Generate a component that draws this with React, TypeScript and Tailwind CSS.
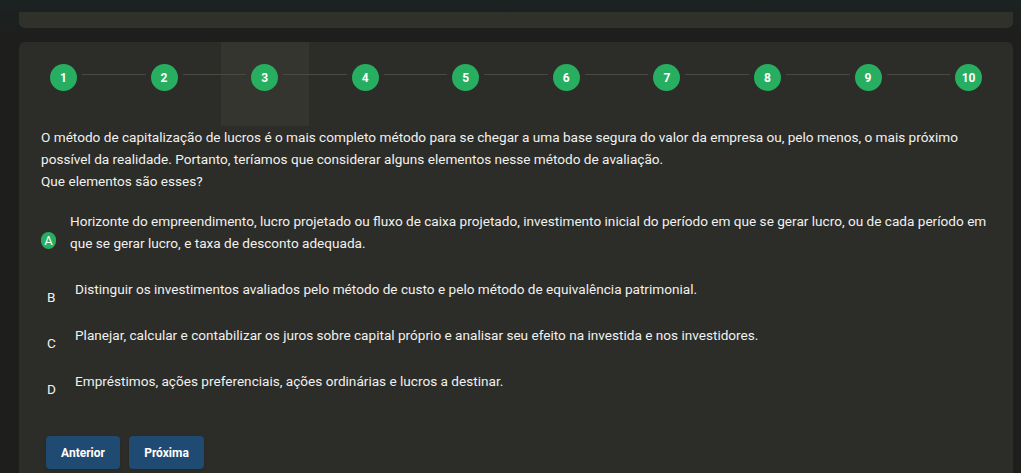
import { Fragment } from 'react'

const steps = [1, 2, 3, 4, 5, 6, 7, 8, 9, 10]

const options = [
  {
    letter: 'A',
    text: 'Horizonte do empreendimento, lucro projetado ou fluxo de caixa projetado, investimento inicial do período em que se gerar lucro, ou de cada período em que se gerar lucro, e taxa de desconto adequada.',
    selected: true,
  },
  { letter: 'B', text: 'Distinguir os investimentos avaliados pelo método de custo e pelo método de equivalência patrimonial.' },
  { letter: 'C', text: 'Planejar, calcular e contabilizar os juros sobre capital próprio e analisar seu efeito na investida e nos investidores.' },
  { letter: 'D', text: 'Empréstimos, ações preferenciais, ações ordinárias e lucros a destinar.' },
]

const App = () => {
  return (
    <div className="min-h-screen bg-[#1e1e1c] font-['Roboto',sans-serif]">
      <div className="bg-gradient-to-b from-[#1b2322] to-[#1e1e1c] pl-[19px] pr-[8px]">
        <div className="h-[28px] pt-[12px]">
          <div className="h-[16px] bg-[#31312c] rounded-b-md" />
        </div>
        <div className="h-[14px]" />
      </div>

      <div className="pl-[19px] pr-[8px]">
        <div className="isolate bg-[#2c2c28] rounded-t-md pb-[24px]">
          {/* etapas */}
          <div className="flex items-start h-[84px] pt-[22px] px-[31px]">
            {steps.map((n, i) => (
              <Fragment key={n}>
                <div className="relative shrink-0">
                  {n === 3 && (
                    <div className="absolute -z-10 -top-[22px] h-[84px] -left-[30px] -right-[31px] bg-[#353530]" />
                  )}
                  <div className="w-[27px] h-[27px] rounded-full bg-[#27ae60] text-white text-[12px] font-bold flex items-center justify-center">
                    {n}
                  </div>
                </div>
                {i < steps.length - 1 && <div className="flex-1 h-px mt-[10px] mx-[5px] bg-[#4a4a44]" />}
              </Fragment>
            ))}
          </div>

          <div className="px-[22px] text-[13.6px] leading-[22px] text-[#f1f1ef]">
            <p>
              O método de capitalização de lucros é o mais completo método para se chegar a uma base segura do valor da empresa ou, pelo menos, o mais próximo possível da realidade. Portanto, teríamos que considerar alguns elementos nesse método de avaliação.
              <br />
              Que elementos são esses?
            </p>

            <div className="flex flex-col mt-[18px]">
              {options.map((o) =>
                o.selected ? (
                  <div key={o.letter} className="flex items-start mb-[24px]">
                    <span className="mt-[22px] mr-[14px] w-[15px] h-[17px] shrink-0 rounded-full bg-[#27ae60] text-white text-[13px] leading-[17px] text-center">
                      {o.letter}
                    </span>
                    <span>{o.text}</span>
                  </div>
                ) : (
                  <div key={o.letter} className="flex items-start mb-[16px]">
                    <span className="mt-[8px] w-[34px] pl-[6px] shrink-0">{o.letter}</span>
                    <span>{o.text}</span>
                  </div>
                ),
              )}
            </div>

            <div className="flex gap-[9px] mt-[20px] pl-[5px]">
              <button className="w-[74px] h-[33px] rounded bg-[#1f4a71] text-white text-[12px] font-bold shadow">
                Anterior
              </button>
              <button className="w-[75px] h-[33px] rounded bg-[#1f4a71] text-white text-[12px] font-bold shadow">
                Próxima
              </button>
            </div>
          </div>
        </div>
      </div>
    </div>
  )
}

export default App
